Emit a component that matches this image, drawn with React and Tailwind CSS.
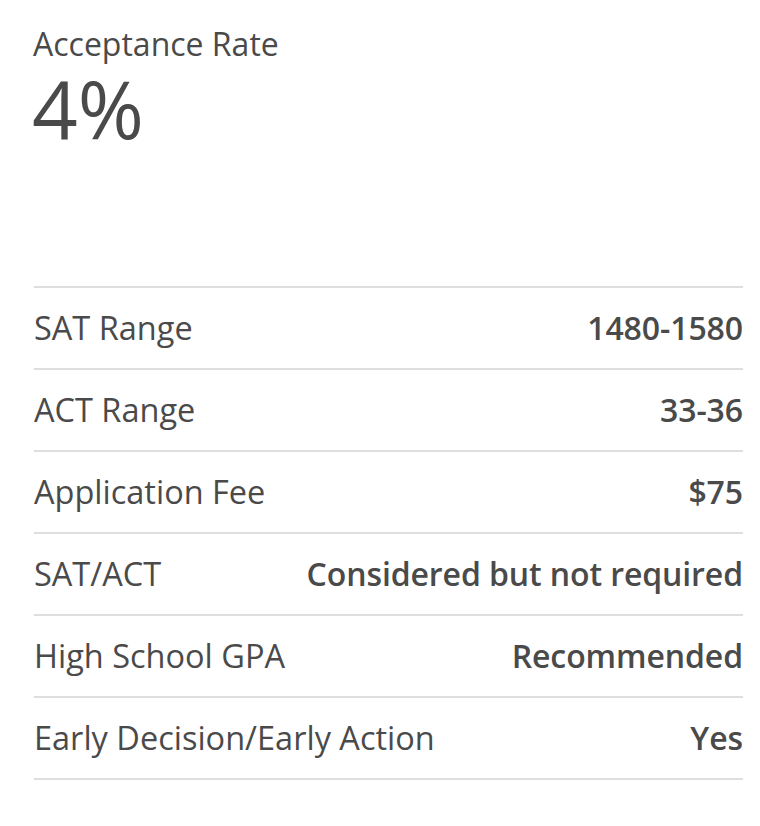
const rows = [
  ["SAT Range", "1480-1580"],
  ["ACT Range", "33-36"],
  ["Application Fee", "$75"],
  ["SAT/ACT", "Considered but not required"],
  ["High School GPA", "Recommended"],
  ["Early Decision/Early Action", "Yes"],
];

export default function App() {
  return (
    <div className="w-[760px] h-[826px] bg-white text-[#4a4a4a] pl-[34px] pr-[17px] pt-[25px]">
      <div className="font-['Open_Sans',sans-serif] text-[32px] leading-[38px] -ml-px">Acceptance Rate</div>
      <div className="font-['Open_Sans',sans-serif] text-[80px] leading-[90px] -ml-[2px]">4%</div>
      <div className="mt-[133px] border-t-2 border-[#dedede]">
        {rows.map(([k, v]) => (
          <div key={k} className="h-[82px] flex items-center justify-between border-b-2 border-[#dedede] font-['Open_Sans',sans-serif]">
            <span className="text-[32.5px]">{k}</span>
            <span className="font-semibold text-[32px] tracking-[-0.1px]">{v}</span>
          </div>
        ))}
      </div>
    </div>
  );
}
